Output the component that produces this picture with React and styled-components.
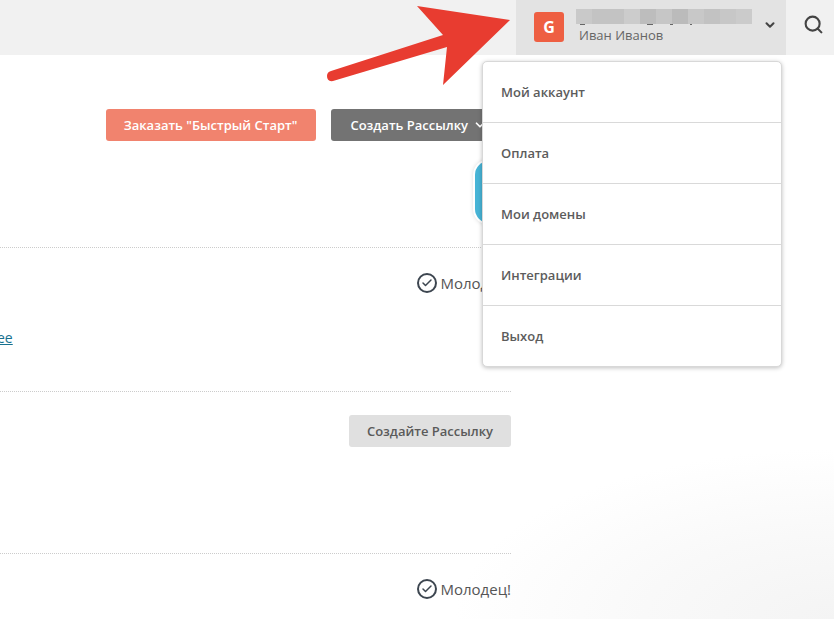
import React from "react";
import styled, { createGlobalStyle } from "styled-components";
import { Check, ChevronDown, Search } from "lucide-react";

const GlobalStyle = createGlobalStyle`
  html, body {
    margin: 0;
    padding: 0;
    height: 100%;
    overflow: hidden;
  }
  body {
    font-family: "Open Sans", "Liberation Sans", sans-serif;
    color: #555;
  }
`;

const Page = styled.div`
  position: relative;
  width: 834px;
  height: 619px;
  overflow: hidden;
  background: radial-gradient(ellipse 380px 170px at 100% 100%, #f4f4f4 0%, #f9f9f9 50%, #ffffff 100%);
`;

const Header = styled.header`
  display: flex;
  justify-content: flex-end;
  height: 55px;
  background: #f1f1f1;
`;

const UserBlock = styled.div`
  display: flex;
  align-items: center;
  width: 270px;
  box-sizing: border-box;
  padding: 0 9px 0 18px;
  background: #e3e3e3;
`;

const Avatar = styled.div`
  display: flex;
  align-items: center;
  justify-content: center;
  flex-shrink: 0;
  width: 30px;
  height: 30px;
  margin-top: -1px;
  border-radius: 3px;
  background: #ee5f42;
  color: #fff;
  font-size: 16px;
  font-weight: 700;
`;

const UserInfo = styled.div`
  display: flex;
  flex-direction: column;
  flex: 1;
  min-width: 0;
  margin-left: 12px;
`;

const BlurredName = styled.div`
  display: flex;
  width: 176px;
  height: 15px;
  margin-top: -2px;
`;

const BlurCell = styled.span`
  flex: 1;
  background: ${(p) => p.$tone};
`;

const NameDescenders = styled.div`
  display: flex;
  height: 1px;
`;

const Descender = styled.span`
  width: ${(p) => p.$width}px;
  margin-left: ${(p) => p.$offset}px;
  background: #666;
`;

const UserName = styled.div`
  margin: 1px 0 0 3px;
  font-size: 13px;
  line-height: 18px;
  color: #666;
`;

const UserCaret = styled(ChevronDown)`
  flex-shrink: 0;
  margin-bottom: 5px;
  color: #444;
`;

const SearchBlock = styled.div`
  display: flex;
  align-items: center;
  justify-content: center;
  width: 48px;
  box-sizing: border-box;
  padding: 0 0 6px 7px;
  color: #444;
`;

const Main = styled.main`
  width: 511px;
`;

const Actions = styled.div`
  display: flex;
  justify-content: flex-end;
  gap: 15px;
  height: 193px;
  box-sizing: border-box;
  padding-top: 54px;
  border-bottom: 1px dotted #ccc;
`;

const buttonTones = {
  orange: { bg: "#f1836e", color: "#fff", padding: "0 19px 0 18px" },
  grey: { bg: "#737373", color: "#fff", padding: "0 19px" },
  light: { bg: "#e0e0e0", color: "#5a5a5a", padding: "0 18px" },
};

const ActionButton = styled.div`
  display: flex;
  align-items: center;
  gap: 5px;
  height: 32px;
  box-sizing: border-box;
  padding: ${(p) => buttonTones[p.$tone].padding};
  border-radius: 3px;
  background: ${(p) => buttonTones[p.$tone].bg};
  color: ${(p) => buttonTones[p.$tone].color};
  font-size: 13px;
  font-weight: 600;
  white-space: nowrap;
`;

const ButtonCaret = styled(ChevronDown)`
  margin-right: 5px;
`;

const Row = styled.div`
  display: flex;
  justify-content: flex-end;
  align-items: flex-start;
  height: ${(p) => p.$height}px;
  box-sizing: border-box;
  padding-top: ${(p) => p.$top}px;
  border-bottom: ${(p) => (p.$last ? "none" : "1px dotted #ccc")};
`;

const RowStack = styled.div`
  display: flex;
  flex-direction: column;
  height: 144px;
  box-sizing: border-box;
  border-bottom: 1px dotted #ccc;
`;

const RowLink = styled.a`
  align-self: flex-start;
  margin-left: -3px;
  color: #17718f;
  font-size: 14px;
  line-height: 19px;
  text-decoration: underline;
`;

const Done = styled.div`
  display: flex;
  align-items: center;
  gap: 3px;
  font-size: 15px;
  line-height: 20px;
  color: #555;
  white-space: nowrap;
`;

const CheckCircle = styled.span`
  display: flex;
  align-items: center;
  justify-content: center;
  width: 20px;
  height: 20px;
  box-sizing: border-box;
  border: 2px solid #3d4650;
  border-radius: 50%;
  color: #3d4650;
`;

const Bubble = styled.div`
  position: absolute;
  left: 475px;
  top: 161px;
  width: 60px;
  height: 62px;
  box-sizing: border-box;
  border-radius: 14px;
  background: #47b4d6;
  box-shadow: 0 0 0 2px #fff, 0 0 4px 2px #ddd;
`;

const Menu = styled.nav`
  position: absolute;
  left: 482px;
  top: 61px;
  width: 300px;
  box-sizing: border-box;
  background: #fff;
  border: 1px solid #d8d8d8;
  border-radius: 5px;
  box-shadow: 0 1px 4px rgba(0, 0, 0, 0.25);
`;

const MenuItem = styled.div`
  display: flex;
  align-items: center;
  height: ${(p) => (p.$last ? 60 : 61)}px;
  box-sizing: border-box;
  padding: 0 18px;
  font-size: 13px;
  font-weight: 600;
  color: #5c5c5c;
  border-bottom: ${(p) => (p.$last ? "none" : "1px solid #d9d9d9")};
`;

const ArrowOverlay = styled.svg`
  position: absolute;
  left: 0;
  top: 0;
  pointer-events: none;
`;

const blurTones = ["#c9c9c9", "#c3c3c3", "#c3c3c3", "#cccccc", "#bdbdbd", "#c6c6c6", "#bbbbbb", "#c8c8c8", "#c2c2c2", "#c7c7c7", "#cbcbcb"];
const descenders = [
  { width: 5, offset: 4 },
  { width: 6, offset: 62 },
  { width: 3, offset: 17 },
  { width: 2, offset: 17 },
];
const menuItems = ["Мой аккаунт", "Оплата", "Мои домены", "Интеграции", "Выход"];

const DoneMark = () => (
  <Done>
    <CheckCircle>
      <Check size={12} strokeWidth={3} />
    </CheckCircle>
    Молодец!
  </Done>
);

const App = () => {
  return (
    <Page>
      <GlobalStyle />
      <Header>
        <UserBlock>
          <Avatar>G</Avatar>
          <UserInfo>
            <BlurredName>
              {blurTones.map((tone, i) => (
                <BlurCell key={i} $tone={tone} />
              ))}
            </BlurredName>
            <NameDescenders>
              {descenders.map((d, i) => (
                <Descender key={i} $width={d.width} $offset={d.offset} />
              ))}
            </NameDescenders>
            <UserName>Иван Иванов</UserName>
          </UserInfo>
          <UserCaret size={14} strokeWidth={3.5} />
        </UserBlock>
        <SearchBlock>
          <Search size={21} strokeWidth={2.4} />
        </SearchBlock>
      </Header>
      <Main>
        <Actions>
          <ActionButton $tone="orange">Заказать "Быстрый Старт"</ActionButton>
          <ActionButton $tone="grey">
            Создать Рассылку
            <ButtonCaret size={14} strokeWidth={3} />
          </ActionButton>
        </Actions>
        <RowStack>
          <Row $height={80} $top={25} $last>
            <DoneMark />
          </Row>
          <RowLink>ee</RowLink>
        </RowStack>
        <Row $height={162} $top={23}>
          <ActionButton $tone="light">Создайте Рассылку</ActionButton>
        </Row>
        <Row $height={65} $top={25} $last>
          <DoneMark />
        </Row>
      </Main>
      <Bubble />
      <ArrowOverlay width="834" height="619" viewBox="0 0 834 619">
        <path
          d="M417 6 L510 20 L443 85 L447 47 L333 81 Q327 82 327 76 Q327 72 331 71 L443 35 Z"
          fill="#e83c30"
        />
      </ArrowOverlay>
      <Menu>
        {menuItems.map((item, i) => (
          <MenuItem key={item} $last={i === menuItems.length - 1}>
            {item}
          </MenuItem>
        ))}
      </Menu>
    </Page>
  );
};

export default App;
